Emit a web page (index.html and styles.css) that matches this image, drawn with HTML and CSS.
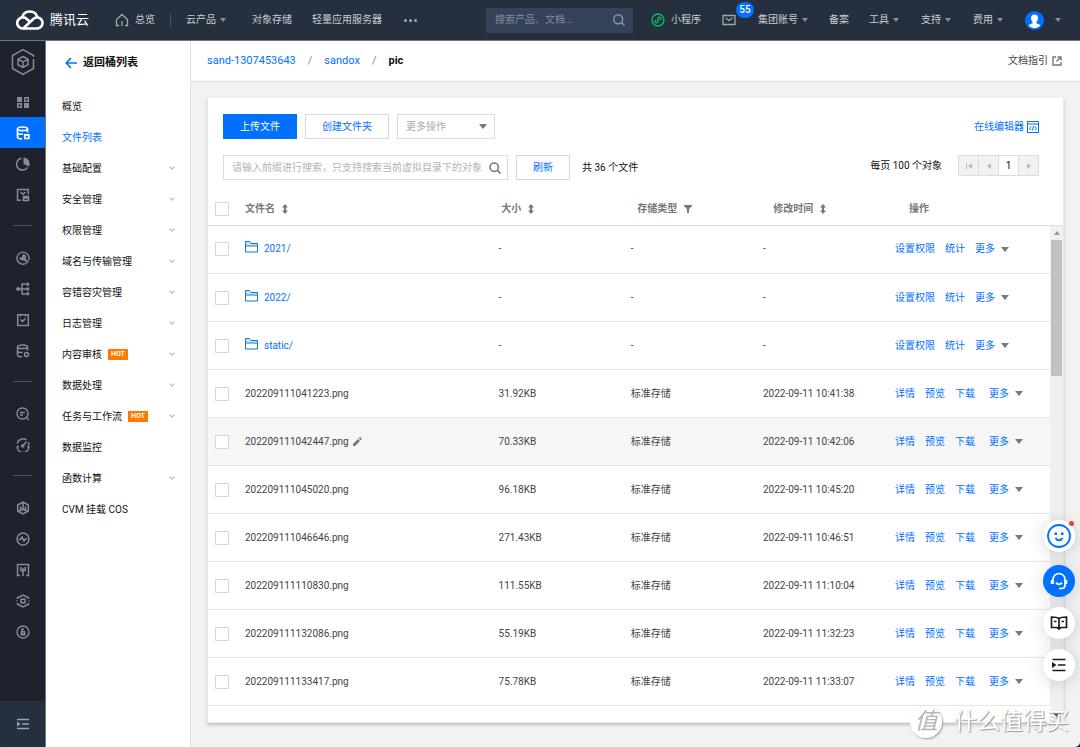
FILE: index.html
```html
<!DOCTYPE html>
<html lang="zh-CN">
<head>
<meta charset="utf-8">
<meta name="viewport" content="width=device-width, initial-scale=1">
<title>文件列表 - 对象存储</title>
<link rel="stylesheet" href="styles.css">
</head>
<body>
<div class="app">
  <header class="topbar">
    <a class="brand" href="#">
      <svg class="brand-mark" viewBox="0 0 28 20" fill="none" stroke="#fff" stroke-width="2.6" stroke-linejoin="round"><path d="M6.5 18.5H21a5.5 5.5 0 1 0-4-9.3L7.5 18.2"/><path d="M7.5 18.5A5.6 5.6 0 1 1 11 9.2l3.6 3"/><path d="M6 7.6C7 3.800 10 1.500 13.700 1.500c4 0 7 2.600 7.900 6.200"/></svg>
      <span>腾讯云</span>
    </a>
    <nav class="topnav">
      <a class="home" href="#"><svg class="i14" viewBox="0 0 14 14" fill="none" stroke="#a3a8b0" stroke-width="1.3"><path d="M4 12.500H1.500V6.500L7 1.500l5.500 5V12.500H10M7 8v5"/></svg>总览</a>
      <span class="split"></span>
      <a class="caret" href="#">云产品</a>
      <a href="#">对象存储</a>
      <a href="#">轻量应用服务器</a>
      <a class="dots" href="#" aria-label="更多"><i></i><i></i><i></i></a>
    </nav>
    <form class="topsearch">
      <input type="text" aria-label="搜索" placeholder="搜索产品、文档...">
      <svg class="i14" viewBox="0 0 14 14" fill="none" stroke="#8d96a3" stroke-width="1.4"><circle cx="6.200" cy="6.200" r="4.500"/><path d="M9.500 9.500l3 3"/></svg>
    </form>
    <nav class="topnav-right">
      <a class="mini" href="#"><svg class="i14" viewBox="0 0 14 14" fill="none" stroke="#07c160" stroke-width="1.300"><circle cx="7" cy="7" r="6"/><path d="M5.500 7.200c-2 .2-2 2.600 0 2.600 1 0 1.500-.6 1.500-1.500V5.700C7 4.800 7.500 4.200 8.500 4.200c2 0 2 2.400 0 2.600"/></svg>小程序</a>
      <a class="mail" href="#" aria-label="消息"><svg class="i14" viewBox="0 0 14 14" fill="none" stroke="#a3a8b0" stroke-width="1.300"><path d="M1 2.500h12v9H1zM3.500 5L7 7.500 10.500 5"/></svg><b class="badge">55</b></a>
      <a class="caret group" href="#">集团账号</a>
      <a class="record" href="#">备案</a>
      <a class="caret" href="#">工具</a>
      <a class="caret" href="#">支持</a>
      <a class="caret" href="#">费用</a>
      <a class="caret user" href="#" aria-label="账号"><svg class="avatar" viewBox="0 0 19 19"><circle cx="9.500" cy="9.500" r="9.500" fill="#0070ff"/><path d="M9.500 3.500c2.300 0 3.500 1.500 3.500 3.600 0 1.700-.6 3-1.600 3.900v1.200c2 .7 3.800 1.200 3.800 2.800a9.500 9.500 0 0 1-11.400 0c0-1.600 1.800-2.100 3.800-2.800V11C6.600 10.100 6 8.800 6 7.100c0-2.100 1.200-3.600 3.500-3.600z" fill="#fff"/></svg></a>
    </nav>
  </header>

  <div class="shell">
    <nav class="rail" aria-label="产品">
      <a class="rail-logo" href="#" aria-label="对象存储"><svg viewBox="0 0 26 28" fill="none" stroke="#858c96" stroke-width="1.500"><path d="M23.500 9V7.500L13 1.500l-10.500 6v13L13 26.500l10.500-6V11"/><path d="M13 8.500l5 2.800v5.400l-5 2.800-5-2.800v-5.400zM8 11.300l5 2.700 5-2.700M13 14v5.500"/></svg></a>
      <a href="#" aria-label="概览"><svg viewBox="0 0 14 14"><path fill="#858c96" d="M1 2h5v5H1zM8 8h5v5H8z"/><path fill="none" stroke="#858c96" stroke-width="1.500" d="M8.800 2.800h3.500v3.500H8.800zM1.800 8.800h3.500v3.500H1.800z"/></svg></a>
      <a class="on" href="#" aria-label="存储桶"><svg viewBox="0 0 14 14" fill="none" stroke="#fff" stroke-width="1.700"><ellipse cx="6.500" cy="2.800" rx="5" ry="1.800"/><path d="M1.500 3v8c0 1 2 1.800 4.500 1.800M11.500 3v3.500M1.500 6.800c0 1 2.500 1.700 5.500 1.400M8.800 8.800h4v3.700h-4z"/></svg></a>
      <a href="#" aria-label="统计"><svg viewBox="0 0 14 14"><path fill="none" stroke="#858c96" stroke-width="1.500" d="M5.500 1.200a6 6 0 1 0 6 9.300"/><path fill="#858c96" d="M7.500.5A6.200 6.200 0 0 1 13 9.500L7.500 7z"/></svg></a>
      <a href="#" aria-label="应用"><svg viewBox="0 0 14 14" fill="none" stroke="#858c96" stroke-width="1.500"><path d="M5 12.300H1.500V1.500h10.800v5M4.500 4L7 6.200 9.500 4M7.500 8.500h5v4h-5zM7.500 10h5"/></svg></a>
      <span class="rail-line"></span>
      <a href="#" aria-label="工具"><svg viewBox="0 0 14 14" fill="none" stroke="#858c96" stroke-width="1.400"><path d="M10.500 12A6 6 0 1 1 12.500 9.500"/><path stroke-width="2.200" d="M7.500 7.500l4.500 4"/><path stroke-width="1.800" d="M7.500 4c1.800.6 2.300 2.300 1.200 3.600s-3.200 1.200-4.200-.2L6.800 7z"/></svg></a>
      <a href="#" aria-label="拓扑"><svg viewBox="0 0 14 14" fill="none" stroke="#858c96" stroke-width="1.400"><path d="M0 7h11M10 2H6v10h4"/><path fill="#858c96" d="M11 1.500h1.500v1.500H11zM11 6.300h1.500v1.500H11zM11 11h1.500v1.500H11zM1.500 6h1.500v2H1.500z"/></svg></a>
      <a href="#" aria-label="任务"><svg viewBox="0 0 14 14" fill="none" stroke="#858c96" stroke-width="1.500"><path d="M1.700 1.800h10.600v10.600H1.700zM4.500 6.500l2 2 3-3M4 3h1M9 3h1"/></svg></a>
      <a href="#" aria-label="数据"><svg viewBox="0 0 14 14" fill="none" stroke="#858c96" stroke-width="1.500"><ellipse cx="6.500" cy="2.800" rx="5" ry="1.800"/><path d="M1.500 3v8c0 1 2 1.800 4.500 1.800M11.500 3v3.500M1.500 7c0 1 2.500 1.700 5 1.400"/><circle cx="10.500" cy="10.500" r="2"/></svg></a>
      <span class="rail-line"></span>
      <a href="#" aria-label="检索"><svg viewBox="0 0 14 14" fill="none" stroke="#858c96" stroke-width="1.400"><circle cx="6.500" cy="6.500" r="5.500"/><path d="M10.500 10.500l2.500 2.500M4 5.500h5M4 8h3"/></svg></a>
      <a href="#" aria-label="监控"><svg viewBox="0 0 14 14" fill="none" stroke="#858c96" stroke-width="1.500"><path d="M1.200 5.500A6 6 0 0 1 10.500 2M12.300 4.200A6 6 0 0 1 12.800 7M1 8.500a6 6 0 0 0 12 0h-2M1 8.500h2M6.800 8l3.700-4.500"/><circle cx="6.700" cy="8" r="1"/></svg></a>
      <span class="rail-line"></span>
      <a href="#" aria-label="迁移"><svg viewBox="0 0 14 14" fill="none" stroke="#858c96" stroke-width="1.500"><path d="M7 1l5.300 3v6L7 13l-5.300-3V4zM7 2v6M7 8l-3.500 2M7 8l3.500 2M4.500 9V5.500M9.500 9V5.500"/></svg></a>
      <a href="#" aria-label="诊断"><svg viewBox="0 0 14 14" fill="none" stroke="#858c96" stroke-width="1.500"><circle cx="7" cy="7" r="6"/><path d="M2.500 7.500h2L6 5l2 4 1.300-2h2"/></svg></a>
      <a href="#" aria-label="接入"><svg viewBox="0 0 14 14" fill="none" stroke="#858c96" stroke-width="1.500"><path d="M4 12.500H1.500v-11h11v11H10M4.800 4v3.500h4.400V4M7 7.500V13M7 5v2"/></svg></a>
      <a href="#" aria-label="集成"><svg viewBox="0 0 14 14" fill="none" stroke="#858c96" stroke-width="1.500"><path d="M1.500 5V3.800L7 1l5.500 2.800V5M1.500 9v1.200L7 13l5.500-2.800V9M5 5.200h4v3.600H5zM1 6.500v1M13 6.500v1"/></svg></a>
      <a href="#" aria-label="安全"><svg viewBox="0 0 14 14" fill="none" stroke="#858c96" stroke-width="1.400"><circle cx="7" cy="7" r="6"/><path d="M5.500 6.800h3.200v3H5.300zM6 6.500V4.200h2M7 8v1"/></svg></a>
      <a class="rail-foot" href="#" aria-label="展开"><svg viewBox="0 0 14 14" fill="none" stroke="#9aa1aa" stroke-width="1.400"><path d="M1 2.500h12M6 7h7M1 11.500h12"/><path fill="#9aa1aa" stroke="none" d="M1 4.500L4.500 7 1 9.500z"/></svg></a>
    </nav>

    <aside class="side">
      <a class="back" href="#"><svg viewBox="0 0 12 12" fill="none" stroke="#0070ff" stroke-width="1.600"><path d="M12 6H1.500M6 1L1.200 6 6 11"/></svg>返回桶列表</a>
      <ul class="menu">
        <li><a href="#">概览</a></li>
        <li><a class="current" href="#">文件列表</a></li>
        <li class="sub"><a href="#">基础配置</a></li>
        <li class="sub"><a href="#">安全管理</a></li>
        <li class="sub"><a href="#">权限管理</a></li>
        <li class="sub"><a href="#">域名与传输管理</a></li>
        <li class="sub"><a href="#">容错容灾管理</a></li>
        <li class="sub"><a href="#">日志管理</a></li>
        <li class="sub"><a href="#">内容审核<b class="hot">HOT</b></a></li>
        <li class="sub"><a href="#">数据处理</a></li>
        <li class="sub"><a href="#">任务与工作流<b class="hot">HOT</b></a></li>
        <li><a href="#">数据监控</a></li>
        <li class="sub"><a href="#">函数计算</a></li>
        <li><a href="#">CVM 挂载 COS</a></li>
      </ul>
    </aside>

    <main class="main">
      <div class="crumbs">
        <a href="#">sand-1307453643</a><span>/</span><a href="#">sandox</a><span>/</span><strong>pic</strong>
        <a class="guide" href="#">文档指引<svg viewBox="0 0 10 10" fill="none" stroke="#777" stroke-width="1.400"><path d="M4 1H1v8h8V6M5.500 1H9v3.500M9 1L4.500 5.500"/></svg></a>
      </div>

      <section class="card">
        <div class="bar">
          <button class="btn primary" type="button">上传文件</button>
          <button class="btn create" type="button">创建文件夹</button>
          <div class="pick"><select aria-label="更多操作"><option>更多操作</option></select></div>
          <a class="editor" href="#">在线编辑器<svg viewBox="0 0 12 12" fill="none" stroke="#0070ff"><path d="M.5.5h11v11H.5zM.5 3h11M4 5.500L2.500 7.300 4 9M8 5.500l1.500 1.800L8 9M6.800 5L5.200 9.500"/></svg></a>
        </div>
        <div class="bar second">
          <div class="find">
            <input type="text" aria-label="前缀搜索" placeholder="请输入前缀进行搜索，只支持搜索当前虚拟目录下的对象">
            <svg viewBox="0 0 12 12" fill="none" stroke="#777" stroke-width="1.600"><circle cx="5.200" cy="5.200" r="4.200"/><path d="M8.300 8.300l3.200 3.200"/></svg>
          </div>
          <button class="btn refresh" type="button">刷新</button>
          <span class="count">共 36 个文件</span>
          <div class="paging">
            <span>每页 100 个对象</span>
            <div class="pager">
              <button type="button" disabled aria-label="首页"><svg viewBox="0 0 8 8" fill="#bbb"><path d="M1 1h1v6H1zM7 1v6L3 4z"/></svg></button>
              <button type="button" disabled aria-label="上一页"><svg viewBox="0 0 8 8" fill="#bbb"><path d="M6 1v6L2 4z"/></svg></button>
              <button type="button" class="page">1</button>
              <button type="button" disabled aria-label="下一页"><svg viewBox="0 0 8 8" fill="#bbb"><path d="M2 1v6l4-3z"/></svg></button>
            </div>
          </div>
        </div>

        <table class="head">
          <thead><tr>
            <th class="c-check"><input type="checkbox" aria-label="全选"></th>
            <th class="c-name">文件名<svg class="sort" viewBox="0 0 6 10"><path d="M3 0l3 3.500H4v3h2L3 10 0 6.500h2v-3H0z"/></svg></th>
            <th class="c-data">大小<svg class="sort" viewBox="0 0 6 10"><path d="M3 0l3 3.500H4v3h2L3 10 0 6.500h2v-3H0z"/></svg></th>
            <th class="c-data">存储类型<svg class="filter" viewBox="0 0 8 8"><path d="M0 0h8v1L5 4v4H3V4L0 1z"/></svg></th>
            <th class="c-data">修改时间<svg class="sort" viewBox="0 0 6 10"><path d="M3 0l3 3.500H4v3h2L3 10 0 6.500h2v-3H0z"/></svg></th>
            <th class="c-act">操作</th>
          </tr></thead>
        </table>

        <div class="scroll">
          <div class="view">
            <table class="rows">
              <tbody>
              <tr><td class="c-check"><input type="checkbox" aria-label="选择 2021/"></td><td class="c-name"><a class="dir" href="#"><svg viewBox="0 0 13 12"><path d="M.5 11V.5h4l1.500 2h6.500V11z" fill="#fff" stroke="#0d78c9"/><path d="M1 1h3.500l1.500 2h6v1.500H1z" fill="#c3e2f7"/><path d="M.5 5h12" stroke="#0d78c9"/></svg>2021/</a></td><td class="c-data">-</td><td class="c-data">-</td><td class="c-data">-</td><td class="c-act"><div class="ops"><a href="#">设置权限</a><a href="#">统计</a><a class="caret" href="#">更多</a></div></td></tr>
              <tr><td class="c-check"><input type="checkbox" aria-label="选择 2022/"></td><td class="c-name"><a class="dir" href="#"><svg viewBox="0 0 13 12"><path d="M.5 11V.5h4l1.500 2h6.500V11z" fill="#fff" stroke="#0d78c9"/><path d="M1 1h3.500l1.500 2h6v1.500H1z" fill="#c3e2f7"/><path d="M.5 5h12" stroke="#0d78c9"/></svg>2022/</a></td><td class="c-data">-</td><td class="c-data">-</td><td class="c-data">-</td><td class="c-act"><div class="ops"><a href="#">设置权限</a><a href="#">统计</a><a class="caret" href="#">更多</a></div></td></tr>
              <tr><td class="c-check"><input type="checkbox" aria-label="选择 static/"></td><td class="c-name"><a class="dir" href="#"><svg viewBox="0 0 13 12"><path d="M.5 11V.5h4l1.500 2h6.500V11z" fill="#fff" stroke="#0d78c9"/><path d="M1 1h3.500l1.500 2h6v1.500H1z" fill="#c3e2f7"/><path d="M.5 5h12" stroke="#0d78c9"/></svg>static/</a></td><td class="c-data">-</td><td class="c-data">-</td><td class="c-data">-</td><td class="c-act"><div class="ops"><a href="#">设置权限</a><a href="#">统计</a><a class="caret" href="#">更多</a></div></td></tr>
              <tr><td class="c-check"><input type="checkbox" aria-label="选择 202209111041223.png"></td><td class="c-name">202209111041223.png</td><td class="c-data">31.92KB</td><td class="c-data">标准存储</td><td class="c-data">2022-09-11 10:41:38</td><td class="c-act"><div class="ops file"><a href="#">详情</a><a href="#">预览</a><a href="#">下载</a><a class="caret" href="#">更多</a></div></td></tr>
              <tr class="hover"><td class="c-check"><input type="checkbox" aria-label="选择 202209111042447.png"></td><td class="c-name">202209111042447.png<svg class="pen" viewBox="0 0 9 9"><path fill="#777" d="M0 9V7l5-5 2 2-5 5zM5.800 1.300L7 0l2 2-1.300 1.300z"/></svg></td><td class="c-data">70.33KB</td><td class="c-data">标准存储</td><td class="c-data">2022-09-11 10:42:06</td><td class="c-act"><div class="ops file"><a href="#">详情</a><a href="#">预览</a><a href="#">下载</a><a class="caret" href="#">更多</a></div></td></tr>
              <tr><td class="c-check"><input type="checkbox" aria-label="选择 202209111045020.png"></td><td class="c-name">202209111045020.png</td><td class="c-data">96.18KB</td><td class="c-data">标准存储</td><td class="c-data">2022-09-11 10:45:20</td><td class="c-act"><div class="ops file"><a href="#">详情</a><a href="#">预览</a><a href="#">下载</a><a class="caret" href="#">更多</a></div></td></tr>
              <tr><td class="c-check"><input type="checkbox" aria-label="选择 202209111046646.png"></td><td class="c-name">202209111046646.png</td><td class="c-data">271.43KB</td><td class="c-data">标准存储</td><td class="c-data">2022-09-11 10:46:51</td><td class="c-act"><div class="ops file"><a href="#">详情</a><a href="#">预览</a><a href="#">下载</a><a class="caret" href="#">更多</a></div></td></tr>
              <tr><td class="c-check"><input type="checkbox" aria-label="选择 202209111110830.png"></td><td class="c-name">202209111110830.png</td><td class="c-data">111.55KB</td><td class="c-data">标准存储</td><td class="c-data">2022-09-11 11:10:04</td><td class="c-act"><div class="ops file"><a href="#">详情</a><a href="#">预览</a><a href="#">下载</a><a class="caret" href="#">更多</a></div></td></tr>
              <tr><td class="c-check"><input type="checkbox" aria-label="选择 202209111132086.png"></td><td class="c-name">202209111132086.png</td><td class="c-data">55.19KB</td><td class="c-data">标准存储</td><td class="c-data">2022-09-11 11:32:23</td><td class="c-act"><div class="ops file"><a href="#">详情</a><a href="#">预览</a><a href="#">下载</a><a class="caret" href="#">更多</a></div></td></tr>
              <tr><td class="c-check"><input type="checkbox" aria-label="选择 202209111133417.png"></td><td class="c-name">202209111133417.png</td><td class="c-data">75.78KB</td><td class="c-data">标准存储</td><td class="c-data">2022-09-11 11:33:07</td><td class="c-act"><div class="ops file"><a href="#">详情</a><a href="#">预览</a><a href="#">下载</a><a class="caret" href="#">更多</a></div></td></tr>
              </tbody>
            </table>
          </div>
          <div class="track" aria-hidden="true"><span class="up"></span><span class="thumb"></span><span class="down"></span></div>
        </div>
      </section>
    </main>
  </div>

  <div class="floats">
    <button class="float smile" type="button" aria-label="反馈"><svg viewBox="0 0 24 24" fill="none" stroke="#0070ff" stroke-width="1.800"><circle cx="12" cy="12" r="11"/><path d="M8.500 14c1.500 3 5.500 3 7 0"/><path stroke-width="2.500" d="M7.500 9.800H10M14 9.800h2.500"/></svg></button>
    <button class="float help" type="button" aria-label="客服"><svg viewBox="0 0 18 18" fill="none" stroke="#fff" stroke-width="1.700"><path d="M3 12V7.500a6 6 0 0 1 12 0V13c0 2-1.500 3.500-4 3.500H9M6 10.500c1.500 2.500 4.500 2.500 6 0"/><path stroke-width="2.500" d="M2 8v4M16 8v4"/></svg></button>
    <button class="float" type="button" aria-label="文档"><svg viewBox="0 0 18 18" fill="none" stroke="#1b1b1b" stroke-width="1.700"><path d="M9 4.500C7 3 4 3 1.500 3v10.500h5.500l2 1.500 2-1.500h5.500V3C14 3 11 3 9 4.500zM9 4.500V15M4 7.500h2.500M11.500 7.500H14"/></svg></button>
    <button class="float" type="button" aria-label="收起"><svg viewBox="0 0 18 18" fill="none" stroke="#1b1b1b" stroke-width="1.700"><path d="M2.500 3.500h13M8 9h7.500M2.500 14.500h13"/><path fill="#1b1b1b" stroke="none" d="M2 6l4.500 3L2 12z"/></svg></button>
  </div>
  <div class="mark"><span class="seal">值</span><span>什么值得买</span></div>
</div>
</body>
</html>
```

FILE: styles.css
```css
*, ::before, ::after { box-sizing: border-box; }
body {
  margin: 0;
  background: #122a35;
  color: #111;
  font: 10px/16px Roboto, "Noto Sans CJK SC", sans-serif;
}
a { color: #0070ff; text-decoration: none; }
button, input, select { font: inherit; }
svg { display: block; flex: none; }
.app {
  position: relative;
  display: flex;
  flex-direction: column;
  height: 100vh;
  overflow: hidden;
  border-radius: 0 0 5px 5px;
  background: #f2f2f2;
}
.i14 { width: 14px; height: 14px; }

.topbar {
  display: flex;
  align-items: center;
  flex: none;
  height: 41px;
  padding: 0 19px 0 16px;
  background: #262f3e;
  border-bottom: 1px solid #6b7686;
}
.topbar a { color: #c9ccd1; white-space: nowrap; }
.topbar .brand { display: flex; align-items: center; gap: 6px; color: #fff; font-size: 13px; }
.brand-mark { width: 28px; height: 20px; }
.topnav, .topnav-right, .home, .mini { display: flex; align-items: center; }
.topnav { margin-left: 26px; gap: 20px; }
.home { gap: 6px; }
.split { width: 1px; height: 13px; background: #4c5564; margin: 0 -5px; }
.caret { display: inline-flex; align-items: center; gap: 4px; }
.caret::after {
  content: "";
  border: 3px solid transparent;
  border-top: 4px solid #8a8f98;
  border-bottom: 0;
}
.topnav .caret { margin-right: 6px; }
.dots { display: flex; gap: 2px; margin-left: 2px; }
.dots i { width: 3px; height: 3px; border-radius: 2px; background: #a3a8b0; }
.topsearch {
  display: flex;
  align-items: center;
  width: 147px;
  height: 25px;
  margin: 0 18px 0 auto;
  padding: 0 7px 0 9px;
  background: #35435a;
}
.topsearch input { flex: 1; min-width: 0; padding: 0; border: 0; background: none; color: #fff; outline: 0; }
.topsearch input::placeholder { color: #858c98; opacity: 1; }
.mini { gap: 6px; }
.mail { position: relative; margin-left: 21px; }
.badge {
  position: absolute;
  left: 14px;
  top: -11px;
  padding: 0 3px;
  min-width: 18px;
  border-radius: 8px;
  background: #0070ff;
  color: #fff;
  text-align: center;
  font-weight: 500;
}
.group { margin-left: 22px; }
.record { margin: 0 20px 0 21px; }
.topnav-right .caret + .caret { margin-left: 22px; }
.topnav-right .user { gap: 11px; }
.avatar { width: 19px; height: 19px; }

.shell { display: flex; flex: 1; min-height: 0; }
.rail { display: flex; flex-direction: column; flex: none; width: 46px; background: #1e222d; border-right: 1px solid #6b7686; }
.rail a { display: flex; align-items: center; justify-content: center; height: 31px; flex: none; }
.rail svg { width: 14px; height: 14px; }
.rail .rail-logo { height: 41px; margin-bottom: 4px; }
.rail .rail-logo svg { width: 26px; height: 28px; }
.rail .on { background: #0070ff; }
.rail-line { flex: none; height: 1px; margin: 15px 13px 16px; background: #4b505a; }
.rail .rail-foot { height: 46px; margin-top: auto; background: #262f3e; }

.side { flex: none; width: 145px; background: #fff; border-right: 1px solid #e2e2e2; }
.back { display: flex; align-items: center; gap: 6px; height: 44px; padding-left: 19px; color: #111; font-size: 11px; font-weight: 700; }
.back svg { width: 12px; height: 12px; }
.menu { margin: 6px 0 0; padding: 0 16px; list-style: none; }
.menu li { display: flex; align-items: center; justify-content: space-between; height: 31px; }
.menu a { display: flex; align-items: center; color: #111; }
.menu .current { color: #0070ff; }
.sub::after { content: ""; width: 4px; height: 4px; margin-bottom: 3px; border: solid #b5b5b5; border-width: 0 1px 1px 0; transform: rotate(45deg); }
.hot { margin-left: 6px; padding: 0 3px; background: #ff7a00; color: #fff; font-size: 7px; line-height: 11px; }

.main { display: flex; flex-direction: column; flex: 1; min-width: 0; }
.crumbs {
  display: flex;
  align-items: center;
  gap: 12px;
  flex: none;
  height: 41px;
  padding: 0 18px 0 16px;
  background: #fff;
  border-bottom: 1px solid #e0e0e0;
  font-size: 11px;
}
.crumbs span { color: #888; }
.crumbs .guide { display: flex; align-items: center; gap: 4px; margin-left: auto; color: #444; font-size: 10px; }
.guide svg { width: 10px; height: 10px; }

.card {
  display: flex;
  flex-direction: column;
  flex: 1;
  min-height: 0;
  margin: 16px 16px 24px;
  border: 1px solid #e8e8e8;
  border-top: 0;
  background: #fff;
  box-shadow: 0 2px 3px rgba(0, 0, 0, .2);
}
.bar { display: flex; align-items: center; gap: 8px; flex: none; padding: 16px 24px 0 15px; }
.btn { height: 25px; padding: 0 16px; border: 1px solid #d3d8e2; background: #fff; color: #0070ff; white-space: nowrap; }
.primary { background: #0070ff; border-color: #0070ff; color: #fff; }
.pick { position: relative; width: 98px; }
.pick select { width: 100%; height: 25px; padding: 0 8px; border: 1px solid #ddd; border-radius: 0; background: #fff; color: #aaa; appearance: none; opacity: 1; }
.pick::after { content: ""; position: absolute; right: 8px; top: 10px; border: 4px solid transparent; border-top: 5px solid #777; border-bottom: 0; pointer-events: none; }
.editor { display: flex; align-items: center; gap: 3px; margin-left: auto; }
.editor svg { width: 12px; height: 12px; }
.find { display: flex; align-items: center; width: 285px; height: 25px; padding: 0 6px 0 8px; border: 1px solid #ddd; }
.find input { flex: 1; min-width: 0; padding: 0; border: 0; outline: 0; background: none; }
.find input::placeholder { color: #b3b3b3; opacity: 1; }
.find svg { width: 12px; height: 12px; }
.count { margin-left: 4px; }
.paging { display: flex; gap: 16px; margin-left: auto; align-self: flex-start; align-items: center; }
.pager { display: flex; border: 1px solid #ddd; }
.pager button { display: flex; align-items: center; justify-content: center; width: 20px; height: 19px; padding: 0; border: 0; border-right: 1px solid #ddd; background: #f2f2f2; }
.pager button:last-child { width: 19px; border-right: 0; }
.pager .page { background: #fff; color: #111; }
.pager svg { width: 8px; height: 8px; }

table { width: 100%; border-collapse: collapse; table-layout: fixed; }
th, td { padding: 0; text-align: left; white-space: nowrap; }
.head { flex: none; margin-top: 13px; color: #777; }
.head tr { height: 32px; }
.head th { border-bottom: 1px solid #ddd; font-weight: 700; }
.rows { color: #444; }
.rows td { height: 48px; border-bottom: 1px solid #e5e5e5; }
.c-check { width: 37px; }
.head .c-data { width: 15.9%; }
.head .c-act { width: 18%; }
.rows .c-data { width: 15.7%; }
.rows .c-act { width: 18.4%; }
input[type="checkbox"] { display: block; appearance: none; width: 14px; height: 14px; margin: 0 0 0 7px; border: 1px solid #d3d8e2; background: #fff; }
.sort, .filter { display: inline-block; margin-left: 7px; fill: #777; vertical-align: middle; }
.sort { width: 6px; height: 10px; }
.filter { width: 8px; height: 8px; }
.hover { background: #f6f6f6; }
.pen { display: inline-block; width: 9px; height: 9px; margin-left: 4px; vertical-align: middle; }
.dir { display: flex; gap: 6px; }
.dir svg { width: 13px; height: 12px; }
.ops { display: flex; gap: 10px; }
.ops .caret { gap: 6px; }
.ops .caret::after { border-width: 5px 4px 0; border-top-color: #777; }
.file .caret { margin-left: 4px; }
.scroll { display: flex; flex: 1; min-height: 0; }
.view { flex: 1; min-width: 0; overflow: hidden; }
.track { display: flex; flex-direction: column; align-items: center; flex: none; width: 13px; padding: 5px 0 4px; background: #f0f0f0; }
.up { border: 3px solid transparent; border-top: 0; border-bottom: 4px solid #999; }
.thumb { width: 11px; height: 136px; margin-top: 5px; background: #c1c1c1; }
.down { margin-top: auto; border: 4px solid transparent; border-top: 5px solid #444; border-bottom: 0; }

.floats { position: absolute; right: 5px; bottom: 66px; display: flex; flex-direction: column; gap: 10px; }
.float { position: relative; display: flex; align-items: center; justify-content: center; width: 32px; height: 32px; padding: 0; border: 0; border-radius: 50%; background: #fff; box-shadow: 0 2px 16px rgba(55, 70, 100, .22); }
.float svg { width: 18px; height: 18px; }
.smile { margin-bottom: 3px; }
.smile svg { width: 24px; height: 24px; }
.smile::after { content: ""; position: absolute; right: 1px; top: 1px; width: 5px; height: 5px; border-radius: 50%; background: #f03d3d; }
.help { background: #0070ff; }

.mark { position: absolute; right: 11px; bottom: 9px; display: flex; align-items: center; gap: 12px; color: #fff; font-size: 23px; line-height: 32px; text-shadow: 1px 1px 1px #999, 0 0 1px #ccc; pointer-events: none; }
.seal { width: 32px; height: 32px; border-radius: 50%; background: rgba(255, 255, 255, .95); box-shadow: 1px 1px 2px #999; color: #b5b5b5; text-align: center; text-shadow: none; font-style: italic; font-size: 23px; }
```
